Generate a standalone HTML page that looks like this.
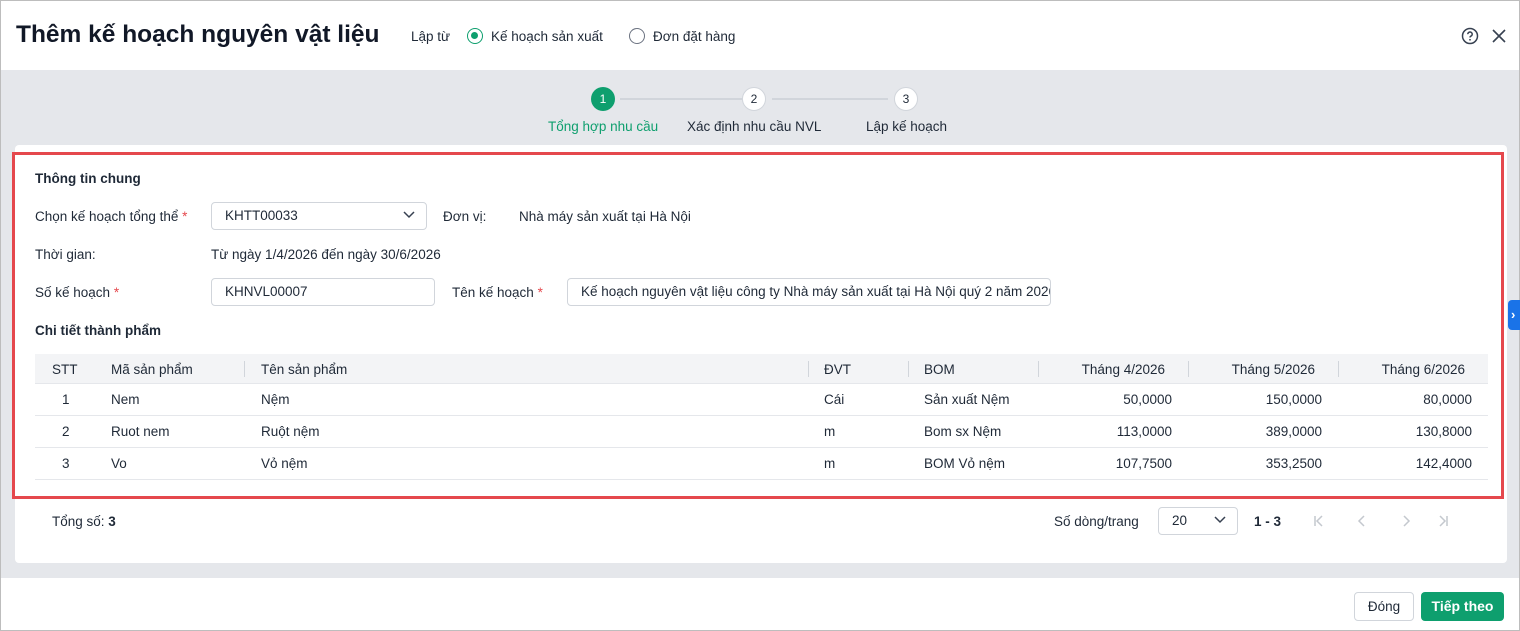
<!DOCTYPE html>
<html><head><meta charset="utf-8"><style>
*{box-sizing:border-box;margin:0;padding:0}
body{width:1520px;height:631px;overflow:hidden;font-family:"Liberation Sans",sans-serif;font-size:13.5px;color:#1f2937;background:#fff;position:relative}
.frame{position:absolute;left:0;top:0;width:1520px;height:631px;border:1px solid #bdbdbd}
.abs{position:absolute;white-space:nowrap}
.gray{position:absolute;left:1px;top:70px;width:1518px;height:508px;background:#e5e7eb}
.card{position:absolute;left:15px;top:145px;width:1492px;height:418px;background:#fff;border-radius:4px}
.red{position:absolute;left:12px;top:152px;width:1492px;height:347px;border:3px solid #e5484d}
.inp{position:absolute;height:28px;border:1px solid #d1d5db;border-radius:4px;background:#fff;padding-left:13px;line-height:26px;white-space:nowrap;overflow:hidden}
.star{color:#e5484d}
.b{font-weight:bold}
.th{position:absolute;top:354px;height:30px;left:35px;width:1453px;background:#f3f4f6;border-bottom:1px solid #e5e7eb}
.sep{position:absolute;top:361px;width:1px;height:16px;background:#d1d5db}
.row{position:absolute;left:35px;width:1453px;height:32px;border-bottom:1px solid #e5e7eb}
.r{text-align:right}
</style></head><body>
<div class="frame"></div>
<div class="abs b" style="left:16px;top:21px;font-size:24.5px;color:#111827">Thêm kế hoạch nguyên vật liệu</div>
<div class="abs" style="left:411px;top:29px">Lập từ</div>
<div class="abs" style="left:467px;top:28px;width:16px;height:16px;border:1.5px solid #0e9f6e;border-radius:50%"><div style="position:absolute;left:3px;top:3px;width:7px;height:7px;border-radius:50%;background:#0e9f6e"></div></div>
<div class="abs" style="left:491px;top:29px">Kế hoạch sản xuất</div>
<div class="abs" style="left:629px;top:28px;width:16px;height:16px;border:1.5px solid #6b7280;border-radius:50%"></div>
<div class="abs" style="left:653px;top:29px">Đơn đặt hàng</div>
<svg class="abs" style="left:1461px;top:27px" width="18" height="18" viewBox="0 0 18 18"><circle cx="9" cy="9" r="7.5" fill="none" stroke="#374151" stroke-width="1.5"/><path d="M6.8 7.2a2.2 2.2 0 1 1 3 2c-.6.3-.8.6-.8 1.3" fill="none" stroke="#374151" stroke-width="1.5"/><circle cx="9" cy="12.8" r=".9" fill="#374151"/></svg>
<svg class="abs" style="left:1492px;top:29px" width="14" height="14" viewBox="0 0 14 14"><path d="M1 1L13 13M13 1L1 13" stroke="#374151" stroke-width="1.6"/></svg>
<div class="gray"></div>
<div class="abs" style="top:98px;height:2px;background:#d1d5db;width:122px;left:620px"></div>
<div class="abs" style="left:772px;top:98px;width:116px;height:2px;background:#d1d5db"></div>
<div class="abs" style="left:591px;top:87px;width:24px;height:24px;border-radius:50%;background:#0e9f6e;color:#fff;text-align:center;line-height:24px;font-size:12px">1</div>
<div class="abs" style="left:742px;top:87px;width:24px;height:24px;border-radius:50%;background:#fff;border:1px solid #d1d5db;text-align:center;line-height:22px;font-size:12px">2</div>
<div class="abs" style="left:894px;top:87px;width:24px;height:24px;border-radius:50%;background:#fff;border:1px solid #d1d5db;text-align:center;line-height:22px;font-size:12px">3</div>
<div class="abs" style="left:548px;top:119px;color:#0e9f6e">Tổng hợp nhu cầu</div>
<div class="abs" style="left:687px;top:119px">Xác định nhu cầu NVL</div>
<div class="abs" style="left:866px;top:119px">Lập kế hoạch</div>
<div class="card"></div>
<div class="red"></div>
<div class="abs" style="left:1508px;top:300px;width:12px;height:30px;background:#1a73e8;border-radius:4px 0 0 4px;color:#fff;font-size:13px;font-weight:bold;line-height:30px;padding-left:3px">›</div>
<div class="abs b" style="left:35px;top:171px">Thông tin chung</div>
<div class="abs" style="left:35px;top:209px">Chọn kế hoạch tổng thể <span class="star">*</span></div>
<div class="inp" style="left:211px;top:202px;width:216px">KHTT00033</div>
<svg class="abs" style="left:402px;top:210px" width="14" height="10" viewBox="0 0 14 10"><path d="M2 2l5 5 5-5" fill="none" stroke="#374151" stroke-width="1.5"/></svg>
<div class="abs" style="left:443px;top:209px">Đơn vị:</div>
<div class="abs" style="left:519px;top:209px">Nhà máy sản xuất tại Hà Nội</div>
<div class="abs" style="left:35px;top:247px">Thời gian:</div>
<div class="abs" style="left:211px;top:247px">Từ ngày 1/4/2026 đến ngày 30/6/2026</div>
<div class="abs" style="left:35px;top:285px">Số kế hoạch <span class="star">*</span></div>
<div class="inp" style="left:211px;top:278px;width:224px">KHNVL00007</div>
<div class="abs" style="left:452px;top:285px">Tên kế hoạch <span class="star">*</span></div>
<div class="inp" style="left:567px;top:278px;width:484px;padding-right:8px">Kế hoạch nguyên vật liệu công ty Nhà máy sản xuất tại Hà Nội quý 2 năm 2026</div>
<div class="abs b" style="left:35px;top:323px">Chi tiết thành phẩm</div>
<div class="th"></div>
<div class="sep" style="left:244px"></div><div class="sep" style="left:808px"></div><div class="sep" style="left:908px"></div><div class="sep" style="left:1038px"></div><div class="sep" style="left:1188px"></div><div class="sep" style="left:1338px"></div>
<div class="abs" style="left:52px;top:362px">STT</div>
<div class="abs" style="left:111px;top:362px">Mã sản phẩm</div>
<div class="abs" style="left:261px;top:362px">Tên sản phẩm</div>
<div class="abs" style="left:824px;top:362px">ĐVT</div>
<div class="abs" style="left:924px;top:362px">BOM</div>
<div class="abs r" style="left:1000px;width:165px;top:362px">Tháng 4/2026</div>
<div class="abs r" style="left:1150px;width:165px;top:362px">Tháng 5/2026</div>
<div class="abs r" style="left:1300px;width:165px;top:362px">Tháng 6/2026</div>
<div class="row" style="top:384px"></div><div class="row" style="top:416px"></div><div class="row" style="top:448px"></div>
<div class="abs" style="left:62px;top:392px">1</div><div class="abs" style="left:111px;top:392px">Nem</div><div class="abs" style="left:261px;top:392px">Nệm</div><div class="abs" style="left:824px;top:392px">Cái</div><div class="abs" style="left:924px;top:392px">Sản xuất Nệm</div><div class="abs r" style="left:1000px;width:172px;top:392px">50,0000</div><div class="abs r" style="left:1150px;width:172px;top:392px">150,0000</div><div class="abs r" style="left:1300px;width:172px;top:392px">80,0000</div>
<div class="abs" style="left:62px;top:424px">2</div><div class="abs" style="left:111px;top:424px">Ruot nem</div><div class="abs" style="left:261px;top:424px">Ruột nệm</div><div class="abs" style="left:824px;top:424px">m</div><div class="abs" style="left:924px;top:424px">Bom sx Nệm</div><div class="abs r" style="left:1000px;width:172px;top:424px">113,0000</div><div class="abs r" style="left:1150px;width:172px;top:424px">389,0000</div><div class="abs r" style="left:1300px;width:172px;top:424px">130,8000</div>
<div class="abs" style="left:62px;top:456px">3</div><div class="abs" style="left:111px;top:456px">Vo</div><div class="abs" style="left:261px;top:456px">Vỏ nệm</div><div class="abs" style="left:824px;top:456px">m</div><div class="abs" style="left:924px;top:456px">BOM Vỏ nệm</div><div class="abs r" style="left:1000px;width:172px;top:456px">107,7500</div><div class="abs r" style="left:1150px;width:172px;top:456px">353,2500</div><div class="abs r" style="left:1300px;width:172px;top:456px">142,4000</div>
<div class="abs" style="left:52px;top:514px">Tổng số: <b>3</b></div>
<div class="abs" style="left:1054px;top:514px">Số dòng/trang</div>
<div class="inp" style="left:1158px;top:507px;width:80px">20</div>
<svg class="abs" style="left:1213px;top:515px" width="14" height="10" viewBox="0 0 14 10"><path d="M2 2l5 5 5-5" fill="none" stroke="#374151" stroke-width="1.5"/></svg>
<div class="abs b" style="left:1254px;top:514px">1 - 3</div>
<svg class="abs" style="left:1312px;top:514px" width="140" height="14" viewBox="0 0 140 14" fill="none" stroke="#c4c8ce" stroke-width="1.5"><path d="M3 2v10M10 2L5 7l5 5"/><path d="M52 2l-5 5 5 5"/><path d="M92 2l5 5-5 5"/><path d="M132 2l5 5-5 5M139 2v10" transform="translate(-4 0)"/></svg>
<div class="abs" style="left:1354px;top:592px;width:60px;height:29px;border:1px solid #d1d5db;border-radius:4px;text-align:center;line-height:27px">Đóng</div>
<div class="abs b" style="left:1421px;top:592px;width:83px;height:29px;background:#0e9f6e;color:#fff;border-radius:4px;text-align:center;line-height:29px;font-size:14px">Tiếp theo</div>
</body></html>
